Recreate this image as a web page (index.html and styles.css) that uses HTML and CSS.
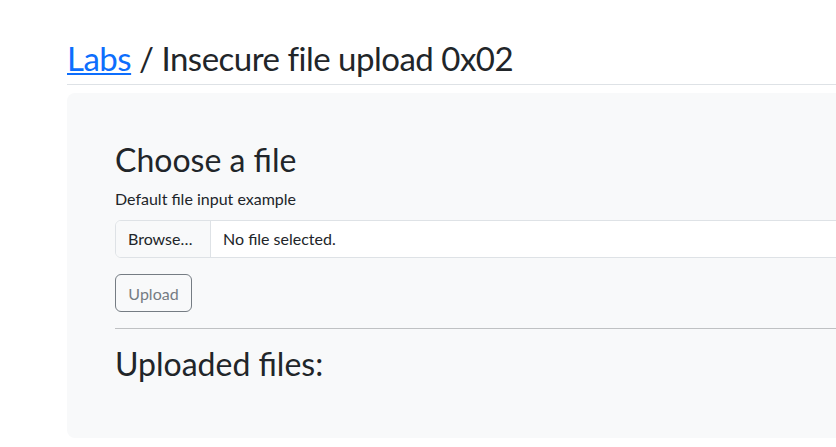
FILE: index.html
```html
<!DOCTYPE html>
<html>
<head>
<meta charset="utf-8">
<link rel="stylesheet" href="styles.css">
</head>
<body>
<div class="page">
  <h1 class="title"><a href="#" class="crumb">Labs</a> / Insecure file upload 0x02</h1>
  <div class="panel">
    <h2 class="heading">Choose a file</h2>
    <label class="label">Default file input example</label>
    <div class="file">
      <span class="browse">Browse…</span>
      <span class="filename">No file selected.</span>
    </div>
    <button class="upload" disabled>Upload</button>
    <div class="rule"></div>
    <h2 class="heading">Uploaded files:</h2>
  </div>
</div>
</body>
</html>
```
FILE: styles.css
```css
html, body {
  margin: 0;
  padding: 0;
  overflow: hidden;
  background: #fff;
}
body {
  font-family: Lato, sans-serif;
  color: #212529;
  font-size: 16px;
  line-height: 1.5;
}
.page {
  width: 1100px;
  margin-left: 67px;
  padding-top: 38px;
}
.title {
  margin: 0;
  font-size: 33px;
  letter-spacing: -0.5px;
  font-weight: 400;
  line-height: 40px;
  padding-bottom: 6px;
  border-bottom: 1px solid #dee2e6;
}
.crumb {
  color: #0d6efd;
  text-decoration: underline;
  text-decoration-thickness: 2px;
  text-underline-offset: 2px;
}
.panel {
  margin-top: 8px;
  background: #f8f9fa;
  border-radius: 8px;
  padding: 48px 48px 47px;
}
.heading {
  margin: 0 0 8px;
  font-size: 32px;
  font-weight: 400;
  line-height: 38px;
}
.label {
  display: block;
  margin-bottom: 9px;
  font-size: 16px;
  line-height: 24px;
}
.file {
  display: flex;
  box-sizing: border-box;
  height: 38px;
  border: 1px solid #dee2e6;
  border-radius: 6px;
  background: #fff;
  overflow: hidden;
}
.browse {
  display: flex;
  align-items: center;
  box-sizing: border-box;
  width: 95px;
  padding: 0 12px;
  background: #f8f9fa;
  border-right: 1px solid #dee2e6;
}
.filename {
  display: flex;
  align-items: center;
  padding: 0 12px;
}
.upload {
  display: block;
  box-sizing: border-box;
  margin-top: 16px;
  height: 38px;
  width: 77px;
  padding: 0;
  font-family: inherit;
  font-size: 16px;
  color: #757c83;
  background: transparent;
  border: 1px solid #757c83;
  border-radius: 6px;
}
.rule {
  margin: 16px 0;
  height: 1px;
  background: #bfc1c3;
}
```
